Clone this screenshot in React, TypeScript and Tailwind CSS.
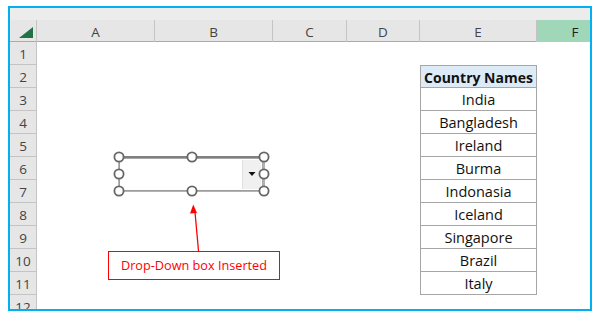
import React from 'react';

const columns = ['A', 'B', 'C', 'D', 'E', 'F'];
const countries = ['India', 'Bangladesh', 'Ireland', 'Burma', 'Indonasia', 'Iceland', 'Singapore', 'Brazil', 'Italy'];
const rows = Array.from({ length: 12 }, (_, i) => i + 1);

// column F runs on past the visible edge
const gridCols = 'grid grid-cols-[27px_118px_118px_74px_73px_117px_76px]';

// handles of the selected combo box
const handles: [number, number][] = [
  [119, 157], [192, 157], [264, 157],
  [119, 174], [264, 174],
  [119, 191], [192, 191], [264, 191],
];

const TableCell: React.FC<{ row: number }> = ({ row }) => {
  if (row === 2) {
    return (
      <div className="h-[23px] border border-[#a6a6a6] bg-[#ddebf7] flex items-center justify-center text-[14px] leading-[18px] font-bold text-[#111]">
        <span className="mt-[2px]">Country Names</span>
      </div>
    );
  }
  if (row >= 3 && row <= 11) {
    return (
      <div className="h-[23px] border-l border-r border-b border-[#a6a6a6] bg-white flex items-center justify-center text-[14.5px] leading-[18px] text-[#111]">
        <span className="mt-[2px]">{countries[row - 3]}</span>
      </div>
    );
  }
  return <div />;
};

const App: React.FC = () => {
  return (
    <div className="w-[601px] h-[319px] bg-white pt-[6px] pl-[8px] font-['Open_Sans',sans-serif]">
      <div className="w-[584px] h-[305px] border-2 border-[#00b0f0] overflow-hidden">
        <div className="relative h-full bg-white">
          {/* strip above column headers */}
          <div className="h-[12px] bg-[#ececec]" />

          {/* column headers */}
          <div className={`${gridCols} grid-rows-[22px] h-[22px] bg-[#e6e6e6] border-b border-[#ababab] text-[13.5px] leading-[18px] text-[#444]`}>
            <div className="relative border-r border-[#c4c4c4]">
              <svg className="absolute left-[9px] top-[7px]" width="15" height="12" viewBox="0 0 15 12">
                <polygon points="14,0 14,11 0,11" fill="#217346" />
              </svg>
            </div>
            {columns.map((c) => (
              <div
                key={c}
                className={
                  c === 'F'
                    ? 'flex items-center justify-center bg-[#a1d7b9] text-[#222]'
                    : 'flex items-center justify-center border-r border-[#c4c4c4]'
                }
              >
                <span className="mt-[2px]">{c}</span>
              </div>
            ))}
          </div>

          {/* sheet rows */}
          {rows.map((r) => (
            <div key={r} className={`${gridCols} grid-rows-[23px] h-[23px]`}>
              <div className="h-[23px] flex items-center justify-center bg-[#e6e6e6] border-b border-r border-[#c4c4c4] text-[13.5px] leading-[18px] text-[#444]">
                <span className="mt-[2px]">{r}</span>
              </div>
              <div />
              <div />
              <div />
              <div />
              <TableCell row={r} />
              <div />
            </div>
          ))}

          {/* inserted combo box with selection handles */}
          <svg className="absolute left-[100px] top-[140px]" width="165" height="60" viewBox="110 148 165 60">
            <rect x="119.5" y="158.5" width="143" height="32" fill="#fff" stroke="#a8a8a8" strokeWidth="1" />
            <rect x="243" y="160" width="18" height="29" fill="#f0f0f0" />
            <line x1="242.5" y1="160" x2="242.5" y2="189" stroke="#e0e0e0" />
            <polygon points="248.5,172 255.5,172 252,176" fill="#111" />
            <line x1="119" y1="157" x2="264" y2="157" stroke="#808080" strokeWidth="2" />
            <line x1="119" y1="191" x2="264" y2="191" stroke="#9a9a9a" strokeWidth="1.5" />
            <line x1="119" y1="157" x2="119" y2="191" stroke="#9a9a9a" strokeWidth="1.5" />
            <line x1="264" y1="157" x2="264" y2="191" stroke="#9a9a9a" strokeWidth="1.5" />
            {handles.map(([x, y]) => (
              <circle key={`${x}-${y}`} cx={x} cy={y} r="4.6" fill="#fff" stroke="#666" strokeWidth="1.8" />
            ))}
          </svg>

          {/* arrow pointing at the combo box */}
          <svg className="absolute left-[175px] top-[192px]" width="35" height="52" viewBox="185 200 35 52">
            <line x1="195" y1="212" x2="198.5" y2="251" stroke="#ff0000" strokeWidth="1.3" />
            <polygon points="193.3,204.5 190,213.5 197,213" fill="#ff0000" />
          </svg>

          {/* callout */}
          <div className="absolute left-[98px] top-[243px] w-[172px] h-[29px] border-[1.5px] border-[#ff0000] bg-white flex items-center justify-center text-[12.7px] text-[#ff0000]">
            Drop-Down box Inserted
          </div>
        </div>
      </div>
    </div>
  );
};

export default App;
